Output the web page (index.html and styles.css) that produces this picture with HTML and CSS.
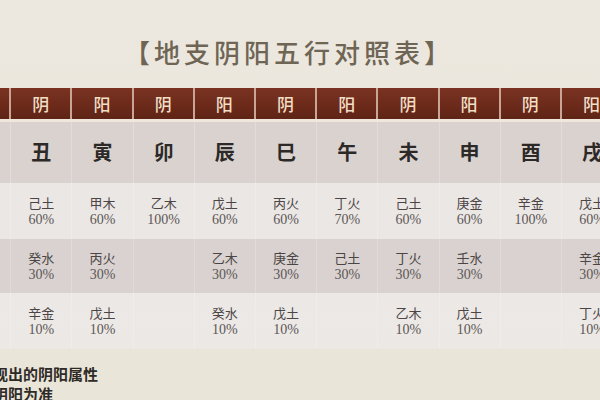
FILE: index.html
```html
<!DOCTYPE html>
<html lang="zh">
<head>
<meta charset="utf-8">
<link rel="stylesheet" href="styles.css">
</head>
<body>
<div class="page">
  <div class="title-wrap"><h1 class="title">【地支阴阳五行对照表】</h1></div>
  <div class="table">
    <div class="row head">
      <div class="cell">阳</div><div class="cell">阴</div><div class="cell">阳</div><div class="cell">阴</div>
      <div class="cell">阳</div><div class="cell">阴</div><div class="cell">阳</div><div class="cell">阴</div>
      <div class="cell">阳</div><div class="cell">阴</div><div class="cell">阳</div><div class="cell">阴</div>
    </div>
    <div class="gap"></div>
    <div class="row branch">
      <div class="cell">子</div><div class="cell">丑</div><div class="cell">寅</div><div class="cell">卯</div>
      <div class="cell">辰</div><div class="cell">巳</div><div class="cell">午</div><div class="cell">未</div>
      <div class="cell">申</div><div class="cell">酉</div><div class="cell">戌</div><div class="cell">亥</div>
    </div>
    <div class="row data light">
      <div class="cell"><span>癸水</span><span class="pct">100%</span></div>
      <div class="cell"><span>己土</span><span class="pct">60%</span></div>
      <div class="cell"><span>甲木</span><span class="pct">60%</span></div>
      <div class="cell"><span>乙木</span><span class="pct">100%</span></div>
      <div class="cell"><span>戊土</span><span class="pct">60%</span></div>
      <div class="cell"><span>丙火</span><span class="pct">60%</span></div>
      <div class="cell"><span>丁火</span><span class="pct">70%</span></div>
      <div class="cell"><span>己土</span><span class="pct">60%</span></div>
      <div class="cell"><span>庚金</span><span class="pct">60%</span></div>
      <div class="cell"><span>辛金</span><span class="pct">100%</span></div>
      <div class="cell"><span>戊土</span><span class="pct">60%</span></div>
      <div class="cell"><span>壬水</span><span class="pct">70%</span></div>
    </div>
    <div class="row data dark">
      <div class="cell"></div>
      <div class="cell"><span>癸水</span><span class="pct">30%</span></div>
      <div class="cell"><span>丙火</span><span class="pct">30%</span></div>
      <div class="cell"></div>
      <div class="cell"><span>乙木</span><span class="pct">30%</span></div>
      <div class="cell"><span>庚金</span><span class="pct">30%</span></div>
      <div class="cell"><span>己土</span><span class="pct">30%</span></div>
      <div class="cell"><span>丁火</span><span class="pct">30%</span></div>
      <div class="cell"><span>壬水</span><span class="pct">30%</span></div>
      <div class="cell"></div>
      <div class="cell"><span>辛金</span><span class="pct">30%</span></div>
      <div class="cell"><span>甲木</span><span class="pct">30%</span></div>
    </div>
    <div class="row data light last">
      <div class="cell"></div>
      <div class="cell"><span>辛金</span><span class="pct">10%</span></div>
      <div class="cell"><span>戊土</span><span class="pct">10%</span></div>
      <div class="cell"></div>
      <div class="cell"><span>癸水</span><span class="pct">10%</span></div>
      <div class="cell"><span>戊土</span><span class="pct">10%</span></div>
      <div class="cell"></div>
      <div class="cell"><span>乙木</span><span class="pct">10%</span></div>
      <div class="cell"><span>戊土</span><span class="pct">10%</span></div>
      <div class="cell"></div>
      <div class="cell"><span>丁火</span><span class="pct">10%</span></div>
      <div class="cell"></div>
    </div>
  </div>
  <div class="note">
    <p>现出的阴阳属性</p>
    <p>阴阳为准</p>
  </div>
</div>
</body>
</html>
```
FILE: styles.css
```css
html, body {
  margin: 0;
  padding: 0;
}
body {
  width: 600px;
  height: 400px;
  overflow: hidden;
  background: #ece7dd;
  font-family: "Noto Sans CJK SC", "Noto Sans", sans-serif;
}
.page {
  width: 600px;
  height: 400px;
  overflow: hidden;
  background: linear-gradient(180deg, #ede8df 0%, #ebe6dc 60%, #e9e5d8 100%);
}
.title-wrap {
  height: 88px;
  box-sizing: border-box;
  padding: 36px 0 0 124px;
}
.title {
  margin: 0;
  font-size: 26px;
  line-height: 32px;
  font-weight: 500;
  letter-spacing: 4px;
  color: #6e6555;
  white-space: nowrap;
}
.table {
  width: 734px;
  margin-left: -50px;
}
.row {
  display: grid;
  grid-template-columns: repeat(12, 61.2px);
}
.head {
  height: 31px;
  background: linear-gradient(180deg, #7a3322 0%, #6c2a1a 55%, #5e2416 100%);
}
.head .cell {
  display: flex;
  align-items: center;
  justify-content: center;
  border-right: 2px solid #c8a596;
  color: #f1dfc6;
  font-size: 17px;
  font-weight: 500;
}
.gap {
  height: 3px;
  background: #efe6de;
}
.branch {
  height: 61px;
  background: #d9d2cf;
}
.branch .cell {
  display: flex;
  align-items: center;
  justify-content: center;
  padding-bottom: 2px;
  font-size: 20px;
  font-weight: 700;
  color: #2c2927;
  border-right: 1px solid rgba(255, 255, 255, 0.25);
}
.data .cell {
  display: flex;
  flex-direction: column;
  align-items: center;
  justify-content: center;
  font-size: 13px;
  line-height: 17px;
  color: #4b4645;
  border-right: 1px solid rgba(255, 255, 255, 0.2);
}
.data .pct {
  font-family: "Liberation Serif", serif;
  font-size: 14px;
  color: #5c5756;
}
.light {
  height: 56px;
  background: #ebe7e5;
}
.dark {
  height: 54px;
  background: #d9d2d0;
}
.last {
  height: 56px;
  background: linear-gradient(180deg, #ebe8e6 0%, #ece9e5 100%);
}
.note {
  margin: 15px 0 0 -7px;
  font-size: 15px;
  line-height: 20px;
  font-weight: 700;
  color: #2e2a26;
}
.note p {
  margin: 0;
  letter-spacing: 0;
}
```
